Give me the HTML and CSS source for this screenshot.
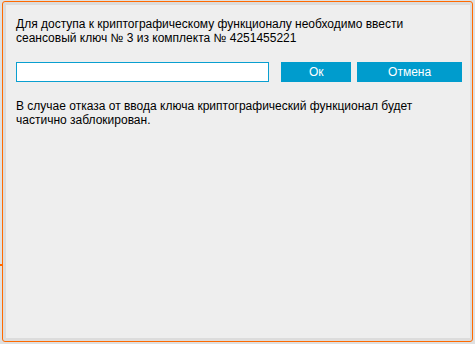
FILE: index.html
```html
<!DOCTYPE html>
<html lang="ru">
<head>
<meta charset="utf-8">
<link rel="stylesheet" href="styles.css">
</head>
<body>
<div class="frame">
  <div class="panel">
    <p class="msg">Для доступа к криптографическому функционалу необходимо ввести<br>сеансовый ключ № 3 из комплекта № 4251455221</p>
    <div class="row">
      <input class="key" type="text">
      <button class="btn ok">Ок</button>
      <button class="btn cancel">Отмена</button>
    </div>
    <p class="msg note">В случае отказа от ввода ключа криптографический функционал будет<br>частично заблокирован.</p>
  </div>
</div>
</body>
</html>
```
FILE: styles.css
```css
html, body {
  margin: 0;
  padding: 0;
}
body {
  background: #e0e0e0;
  width: 475px;
  height: 344px;
  overflow: hidden;
  font-family: "Liberation Sans", Arial, sans-serif;
  font-size: 12px;
  color: #000;
}
.frame {
  position: relative;
  box-sizing: border-box;
  margin: 1px 2px 0 2px;
  width: 471px;
  height: 341px;
  border: 1px solid #ff6a00;
  border-radius: 3px;
  background: #dcdcdc;
  padding: 3px 2px 3px 3px;
}
.frame::before {
  content: "";
  position: absolute;
  left: -3px;
  top: 262px;
  width: 2px;
  height: 2px;
  background: #ff6a00;
}
.panel {
  box-sizing: border-box;
  height: 100%;
  background: #eeeeee;
  padding: 12px 8px 0 10px;
}
.msg {
  margin: 0;
  line-height: 14px;
  white-space: nowrap;
}
.row {
  display: flex;
  margin-top: 17px;
  height: 20px;
}
.key {
  box-sizing: border-box;
  width: 254px;
  height: 20px;
  margin: 0;
  border: 1px solid #0a9fd0;
  background: #fff;
  padding: 0 3px;
  outline: none;
}
.btn {
  box-sizing: border-box;
  height: 20px;
  margin: 0;
  border: 0;
  padding: 0;
  background: #009ccd;
  color: #fff;
  font-family: "Liberation Sans", Arial, sans-serif;
  font-size: 12px;
  line-height: 20px;
}
.ok {
  width: 70px;
  margin-left: 12px;
}
.cancel {
  width: 105px;
  margin-left: 6px;
}
.note {
  margin-top: 17px;
}
```
